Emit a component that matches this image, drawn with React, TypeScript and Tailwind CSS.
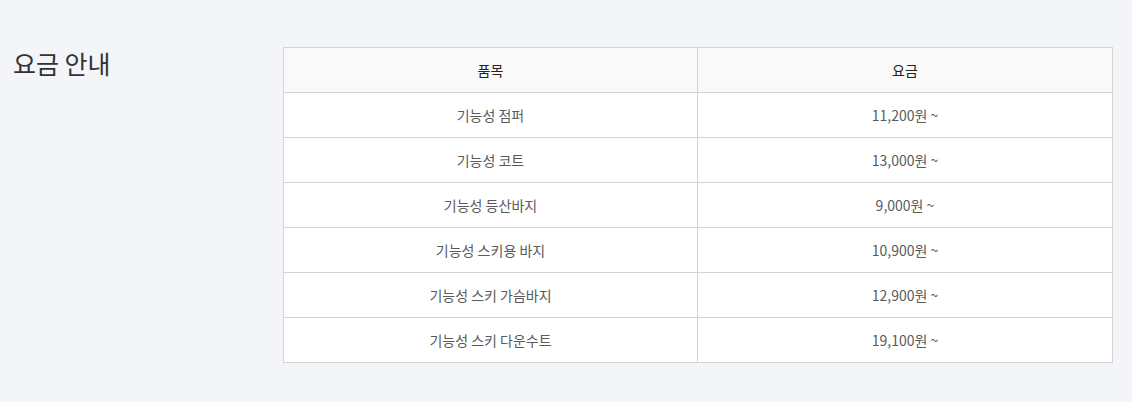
const rows: [string, string][] = [
  ["기능성 점퍼", "11,200원 ~"],
  ["기능성 코트", "13,000원 ~"],
  ["기능성 등산바지", "9,000원 ~"],
  ["기능성 스키용 바지", "10,900원 ~"],
  ["기능성 스키 가슴바지", "12,900원 ~"],
  ["기능성 스키 다운수트", "19,100원 ~"],
];

export default function App() {
  return (
    <div
      className="w-[1132px] h-[402px] bg-[#f4f5f9] flex pt-[47px]"
      style={{ fontFamily: '"Noto Sans CJK KR", "Noto Sans", sans-serif' }}
    >
      <div className="w-[283px] pl-[13px] shrink-0">
        <h2 className="text-[25px] leading-[34px] text-[#333] font-normal mt-[-1px]">요금 안내</h2>
      </div>
      <table className="w-[830px] border-collapse border border-[#d3d3d3] table-fixed h-fit">
        <thead>
          <tr className="bg-[#f9f9f9] h-[45px]">
            <th className="w-[414px] border border-[#d3d3d3] text-[14px] font-normal text-[#222] p-0">품목</th>
            <th className="border border-[#d3d3d3] text-[14px] font-normal text-[#222] p-0">요금</th>
          </tr>
        </thead>
        <tbody>
          {rows.map(([name, price]) => (
            <tr key={name} className="bg-white h-[45px]">
              <td className="border border-[#d3d3d3] text-center text-[14px] text-[#5a5a5a] p-0">{name}</td>
              <td className="border border-[#d3d3d3] text-center text-[14px] text-[#5a5a5a] p-0">{price}</td>
            </tr>
          ))}
        </tbody>
      </table>
    </div>
  );
}
